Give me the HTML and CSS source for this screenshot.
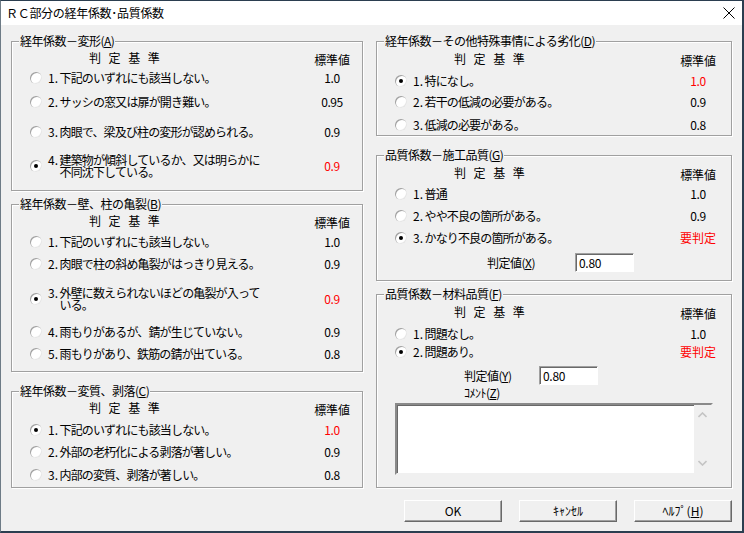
FILE: index.html
```html
<!DOCTYPE html>
<html lang="ja">
<head>
<meta charset="utf-8">
<title>ＲＣ部分の経年係数･品質係数</title>
<link rel="stylesheet" href="styles.css">
</head>
<body>
<div class="window">
  <div class="titlebar">
    <span class="title">ＲＣ部分の経年係数･品質係数</span>
    <svg class="close" width="12" height="12" viewBox="0 0 12 12"><path d="M0.5 0.5 L11.5 11.5 M11.5 0.5 L0.5 11.5" stroke="#000" stroke-width="1" fill="none"/></svg>
  </div>
  <div class="content">
    <div class="col left">
      <div class="group ga">
        <span class="legend">経年係数－変形(<u>A</u>)</span>
        <div class="head"><span class="crit">判定基準</span><span class="hval">標準値</span></div>
        <div class="row m3"><span class="radio"></span><span class="label"><span class="num">1.</span>下記のいずれにも該当しない。</span><span class="val">1.0</span></div>
        <div class="row m8"><span class="radio"></span><span class="label"><span class="num">2.</span>サッシの窓又は扉が開き難い。</span><span class="val">0.95</span></div>
        <div class="row m14"><span class="radio"></span><span class="label"><span class="num">3.</span>肉眼で、梁及び柱の変形が認められる。</span><span class="val">0.9</span></div>
        <div class="row two m14"><span class="radio on"></span><span class="label"><span class="num">4.</span><span class="txt"><span class="ln">建築物が傾斜しているか、又は明らかに</span><span class="ln">不同沈下している。</span></span></span><span class="val red">0.9</span></div>
      </div>
      <div class="group gb">
        <span class="legend">経年係数－壁、柱の亀裂(<u>B</u>)</span>
        <div class="head"><span class="crit">判定基準</span><span class="hval">標準値</span></div>
        <div class="row m4"><span class="radio"></span><span class="label"><span class="num">1.</span>下記のいずれにも該当しない。</span><span class="val">1.0</span></div>
        <div class="row m6"><span class="radio"></span><span class="label"><span class="num">2.</span>肉眼で柱の斜め亀裂がはっきり見える。</span><span class="val">0.9</span></div>
        <div class="row two m15"><span class="radio on"></span><span class="label"><span class="num">3.</span><span class="txt"><span class="ln">外壁に数えられないほどの亀裂が入って</span><span class="ln">いる。</span></span></span><span class="val red">0.9</span></div>
        <div class="row m13"><span class="radio"></span><span class="label"><span class="num">4.</span>雨もりがあるが、錆が生じていない。</span><span class="val">0.9</span></div>
        <div class="row m6"><span class="radio"></span><span class="label"><span class="num">5.</span>雨もりがあり、鉄筋の錆が出ている。</span><span class="val">0.8</span></div>
      </div>
      <div class="group gc">
        <span class="legend">経年係数－変質、剥落(<u>C</u>)</span>
        <div class="head"><span class="crit">判定基準</span><span class="hval">標準値</span></div>
        <div class="row m5"><span class="radio on"></span><span class="label"><span class="num">1.</span>下記のいずれにも該当しない。</span><span class="val red">1.0</span></div>
        <div class="row m6"><span class="radio"></span><span class="label"><span class="num">2.</span>外部の老朽化による剥落が著しい。</span><span class="val">0.9</span></div>
        <div class="row m7"><span class="radio"></span><span class="label"><span class="num">3.</span>内部の変質、剥落が著しい。</span><span class="val">0.8</span></div>
      </div>
    </div>
    <div class="col right">
      <div class="group gd">
        <span class="legend">経年係数－その他特殊事情による劣化(<u>D</u>)</span>
        <div class="head"><span class="crit">判定基準</span><span class="hval">標準値</span></div>
        <div class="row m5"><span class="radio on"></span><span class="label"><span class="num">1.</span>特になし。</span><span class="val red">1.0</span></div>
        <div class="row m5"><span class="radio"></span><span class="label"><span class="num">2.</span>若干の低減の必要がある。</span><span class="val">0.9</span></div>
        <div class="row m7"><span class="radio"></span><span class="label"><span class="num">3.</span>低減の必要がある。</span><span class="val">0.8</span></div>
      </div>
      <div class="group gg">
        <span class="legend">品質係数－施工品質(<u>G</u>)</span>
        <div class="head"><span class="crit">判定基準</span><span class="hval">標準値</span></div>
        <div class="row m4"><span class="radio"></span><span class="label"><span class="num">1.</span>普通</span><span class="val">1.0</span></div>
        <div class="row m6"><span class="radio"></span><span class="label"><span class="num">2.</span>やや不良の箇所がある。</span><span class="val">0.9</span></div>
        <div class="row m6"><span class="radio on"></span><span class="label"><span class="num">3.</span>かなり不良の箇所がある。</span><span class="val red big">要判定</span></div>
        <div class="judge jx m7"><span class="jlabel">判定値(<u>X</u>)</span><span class="edit">0.80</span></div>
      </div>
      <div class="group gf">
        <span class="legend">品質係数－材料品質(<u>F</u>)</span>
        <div class="head"><span class="crit">判定基準</span><span class="hval">標準値</span></div>
        <div class="row m5"><span class="radio"></span><span class="label"><span class="num">1.</span>問題なし。</span><span class="val">1.0</span></div>
        <div class="row m2"><span class="radio on"></span><span class="label"><span class="num">2.</span>問題あり。</span><span class="val red big">要判定</span></div>
        <div class="judge jy m6"><span class="jlabel">判定値(<u>Y</u>)</span><span class="edit">0.80</span></div>
        <div class="comment">ｺﾒﾝﾄ(<u>Z</u>)</div>
        <div class="memo">
          <div class="sb">
            <svg width="9" height="6" viewBox="0 0 9 6"><path d="M0.5 5 L4.5 1 L8.5 5" stroke="#c4c4c4" stroke-width="1.6" fill="none"/></svg>
            <svg width="9" height="6" viewBox="0 0 9 6"><path d="M0.5 1 L4.5 5 L8.5 1" stroke="#c4c4c4" stroke-width="1.6" fill="none"/></svg>
          </div>
        </div>
      </div>
      <div class="buttons">
        <div class="btn">OK</div>
        <div class="btn">ｷｬﾝｾﾙ</div>
        <div class="btn">ﾍﾙﾌﾟ(<u>H</u>)</div>
      </div>
    </div>
  </div>
</div>
</body>
</html>
```

FILE: styles.css
```css
* { box-sizing: border-box; }
body {
  margin: 0;
  background: #f0f0f0;
  font-family: "Noto Sans CJK JP", "Noto Sans", sans-serif;
  font-size: 12px;
  color: #000;
}
u { text-underline-offset: 1px; }
.window {
  width: 744px;
  height: 533px;
  border-top: 1px solid #2b3e50;
  border-right: 2px solid #2b3e50;
  border-bottom: 2px solid #2b3e50;
  border-left: 1px solid #6d7b86;
  background: #f0f0f0;
  display: flex;
  flex-direction: column;
}
.titlebar {
  height: 24px;
  flex: none;
  background: #fff;
  display: flex;
  align-items: center;
  justify-content: space-between;
  padding: 0 7px 0 5px;
}
.title { line-height: 14px; letter-spacing: -0.3px; white-space: nowrap; }
.content {
  display: flex;
  gap: 13px;
  padding: 16px 10px 0 10px;
}
.col { display: flex; flex-direction: column; flex: none; }
.left { width: 352px; }
.right { width: 356px; }
.group {
  position: relative;
  border: 1px solid #a0a0a0;
  box-shadow: 1px 1px 0 #fff, inset 1px 1px 0 #fff;
  padding-top: 9px;
  display: flex;
  flex-direction: column;
  flex: none;
}
.right .group { padding-top: 10px; }
.ga { height: 150px; }
.gb { height: 168px; margin-top: 13px; }
.gc { height: 97px; margin-top: 19px; }
.gd { height: 95px; }
.gg { height: 126px; margin-top: 19px; }
.gf { height: 194px; margin-top: 13px; }
.legend {
  position: absolute;
  top: -8px;
  left: 7px;
  padding: 0 1px;
  background: #f0f0f0;
  line-height: 14px;
  letter-spacing: -0.5px;
  white-space: nowrap;
}
.head {
  display: flex;
  height: 16px;
  padding-left: 18px;
  padding-right: 5px;
  flex: none;
}
.crit {
  flex: 1;
  margin-left: 59px;
  align-self: flex-start;
  line-height: 14px;
  letter-spacing: 7.6px;
}
.hval {
  width: 50px;
  text-align: center;
  align-self: flex-end;
  line-height: 14px;
  letter-spacing: -0.2px;
}
.row {
  display: flex;
  align-items: center;
  height: 16px;
  padding-left: 18px;
  padding-right: 5px;
  flex: none;
}
.right .row, .right .head { padding-right: 8px; }
.row.two { height: 24px; }
.radio {
  position: relative;
  width: 12px;
  height: 12px;
  flex: none;
  border-radius: 50%;
  background: #fff;
  box-shadow: inset 1px 1px 0 #a0a0a0, inset -1px -1px 0 #e6e6e6;
  margin-right: 6px;
}
.radio.on::after {
  content: "";
  position: absolute;
  left: 4px;
  top: 4px;
  width: 4px;
  height: 4px;
  border-radius: 50%;
  background: #000;
}
.label {
  flex: 1;
  display: flex;
  white-space: nowrap;
  letter-spacing: -0.85px;
  line-height: 12px;
}
.num { width: 11.5px; flex: none; letter-spacing: 0; }
.txt { display: flex; flex-direction: column; }
.ln { display: block; height: 12px; line-height: 12px; }
.val {
  width: 50px;
  text-align: center;
  letter-spacing: -0.4px;
  line-height: 12px;
}
.val.big { letter-spacing: 0; font-size: 12px; }
.red { color: #ff0000; }
.m2 { margin-top: 2px; }
.m3 { margin-top: 3px; }
.m4 { margin-top: 4px; }
.m5 { margin-top: 5px; }
.m6 { margin-top: 6px; }
.m7 { margin-top: 7px; }
.m8 { margin-top: 8px; }
.m13 { margin-top: 13px; }
.m14 { margin-top: 14px; }
.m15 { margin-top: 15px; }
.judge {
  display: flex;
  align-items: center;
  height: 19px;
  flex: none;
}
.jx { padding-left: 110px; }
.jx .jlabel { width: 88px; }
.jy { padding-left: 87px; }
.jy .jlabel { width: 75px; }
.jlabel { line-height: 14px; letter-spacing: -0.5px; white-space: nowrap; }
.edit {
  width: 59px;
  height: 19px;
  background: #fff;
  border: 1px solid;
  border-color: #a0a0a0 #fff #fff #a0a0a0;
  box-shadow: inset 1px 1px 0 #696969;
  padding-left: 3px;
  display: flex;
  align-items: center;
  line-height: 14px;
  letter-spacing: -0.3px;
}
.comment {
  height: 16px;
  padding-left: 87px;
  line-height: 16px;
  letter-spacing: -0.5px;
  flex: none;
}
.memo {
  margin-top: 2px;
  margin-left: 18px;
  width: 318px;
  height: 72px;
  flex: none;
  background: #fff;
  border: 2px solid;
  border-color: #8a8a8a #f0f0f0 #f0f0f0 #8a8a8a;
  box-shadow: inset 1px 1px 0 #696969;
  display: flex;
  justify-content: flex-end;
}
.sb {
  width: 17px;
  background: #f0f0f0;
  display: flex;
  flex-direction: column;
  justify-content: space-between;
  align-items: center;
  padding: 7px 0 7px;
}
.buttons {
  display: flex;
  justify-content: flex-end;
  gap: 17px;
  margin-top: 12px;
}
.btn {
  width: 98px;
  height: 22px;
  background: #f0f0f0;
  border: 1px solid;
  border-color: #fff #696969 #696969 #fff;
  box-shadow: inset -1px -1px 0 #a0a0a0;
  display: flex;
  align-items: center;
  justify-content: center;
  line-height: 14px;
  white-space: nowrap;
}
```
